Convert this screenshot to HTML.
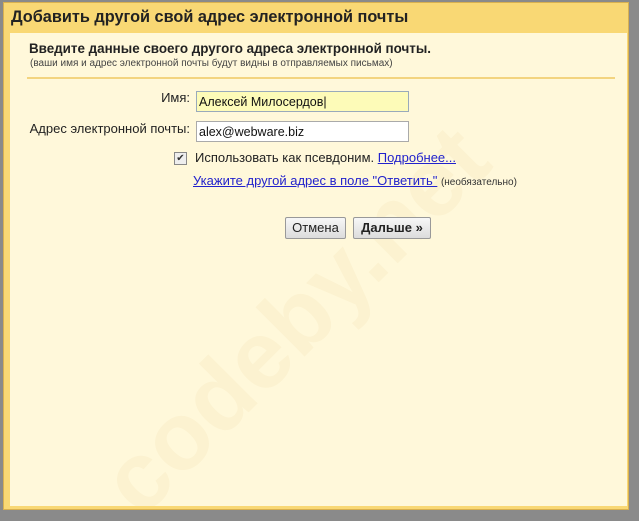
<!DOCTYPE html>
<html><head><meta charset="utf-8"><style>
body{margin:0;width:639px;height:521px;background:#8a8a8a;position:relative;overflow:hidden;font-family:"Liberation Sans",Arial,sans-serif;}
.frame{position:absolute;left:3px;top:2px;width:626px;height:508px;background:#f9d874;border:1px solid #d8b050;box-sizing:border-box;}
.title{position:absolute;left:11px;top:8px;font-size:16.3px;font-weight:bold;color:#222;}
.inner{position:absolute;left:10px;top:33px;width:617px;height:473px;background:#fff8da;overflow:hidden;}
.wm{position:absolute;left:70px;font-size:96px;font-weight:bold;color:#fcf2d0;transform:rotate(-45deg);transform-origin:left top;white-space:nowrap;top:425px;}
.h{position:absolute;left:19px;top:8px;font-size:13.4px;font-weight:bold;color:#222;}
.s{position:absolute;left:20px;top:25px;font-size:10px;color:#444;}
.hr{position:absolute;left:17px;top:44px;width:588px;height:2px;background:#f3d47f;}
.lbl{position:absolute;font-size:13px;color:#222;text-align:right;width:180px;}
.inp{position:absolute;left:186px;width:213px;height:21px;border:1px solid #aaa;box-sizing:border-box;background:#fff;font-size:12.5px;padding:3px 2px;color:#111;}
a{color:#2222cc;text-decoration:underline;}
.btn{position:absolute;top:184px;height:22px;border:1px solid #999;border-radius:2px;background:linear-gradient(#f7f7f7,#dcdcdc);font-size:13px;color:#222;box-sizing:border-box;text-align:center;line-height:20px;}
</style></head><body>
<div class="frame"></div>
<div class="title">Добавить другой свой адрес электронной почты</div>
<div class="inner">
<div class="wm">codeby.net</div>
<div class="h">Введите данные своего другого адреса электронной почты.</div>
<div class="s">(ваши имя и адрес электронной почты будут видны в отправляемых письмах)</div>
<div class="hr"></div>
<div class="lbl" style="left:0;top:57px">Имя:</div>
<div class="inp" style="top:58px;background:#fdfbb8;border-color:#9ab;">Алексей Милосердов|</div>
<div class="lbl" style="left:0;top:88px">Адрес электронной почты:</div>
<div class="inp" style="top:88px;">alex@webware.biz</div>
<div style="position:absolute;left:164px;top:119px;width:11px;height:11px;border:1px solid #888;background:#eee;font-size:10px;line-height:11px;text-align:center;color:#333;">✔</div>
<div style="position:absolute;left:185px;top:117px;font-size:13px;color:#222;">Использовать как псевдоним. <a>Подробнее...</a></div>
<div style="position:absolute;left:183px;top:140px;font-size:13px;"><a>Укажите другой адрес в поле "Ответить"</a> <span style="font-size:10px;color:#333">(необязательно)</span></div>
<div class="btn" style="left:275px;width:61px;">Отмена</div>
<div class="btn" style="left:343px;width:78px;font-weight:bold;">Дальше »</div>
</div>
</body></html>
